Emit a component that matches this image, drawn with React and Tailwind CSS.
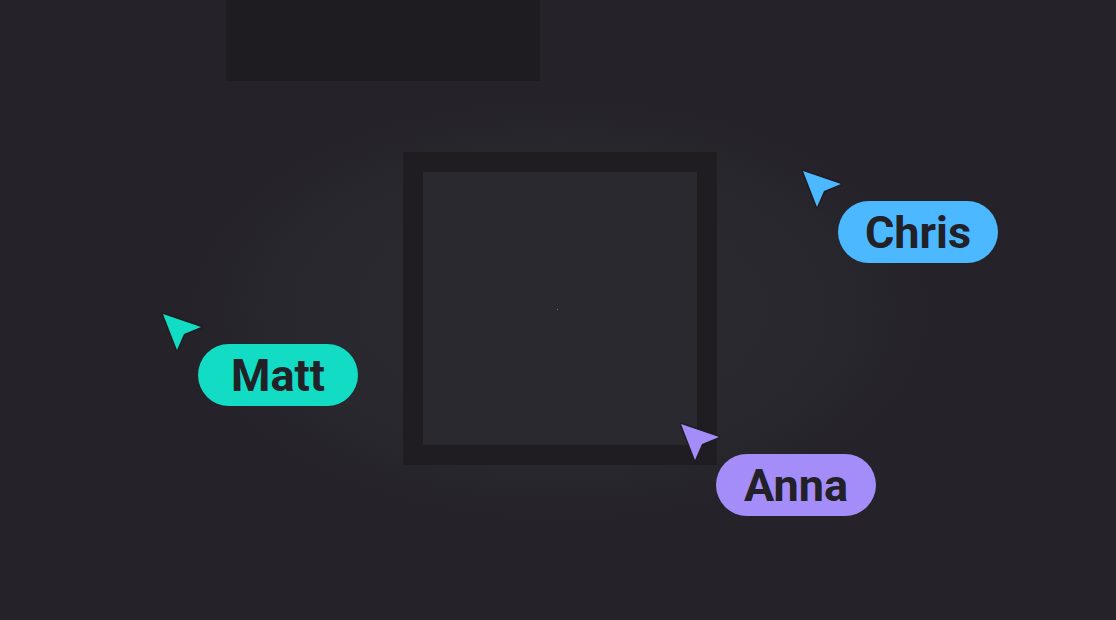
import React from "react";

const users = [
  { name: "Chris", color: "#4cb8ff", x: 803, y: 171, pill: "bg-[#4cb8ff]" },
  { name: "Matt", color: "#12dcc4", x: 163, y: 314, pill: "bg-[#12dcc4]" },
  { name: "Anna", color: "#a48cf9", x: 681, y: 424, pill: "bg-[#a48cf9]" },
];

function Cursor({ user }) {
  return (
    <div className="absolute" style={{ left: user.x - 6, top: user.y - 6 }}>
      <svg width="52" height="52" viewBox="0 0 52 52" className="block">
        <path
          d="M6 6 L44 19 L27 26 L20 42 Z"
          fill={user.color}
          stroke="#1f1d22"
          strokeWidth="3"
          strokeLinejoin="round"
          paintOrder="stroke"
        />
      </svg>
      <div
        className={`absolute left-[41px] top-[36px] flex h-[62px] w-[160px] items-center justify-center rounded-full ${user.pill} text-[45px] font-bold leading-none text-[#222127]`}
        style={{ fontFamily: "Roboto, 'Liberation Sans', sans-serif" }}
      >
        {user.name}
      </div>
    </div>
  );
}

export default function App() {
  return (
    <div className="relative h-[620px] w-[1116px] overflow-hidden bg-[#252329] bg-[radial-gradient(ellipse_370px_210px_at_560px_310px,#2b2a31_0%,#29282f_70%,#252329_100%)]">
      <div className="ml-[226px] h-[81px] w-[314px] bg-[#1e1c21]" />
      <div className="relative ml-[403px] mt-[71px] h-[313px] w-[314px] border-[20px] border-[#1f1d22] bg-[#2a2930]">
        <div className="absolute left-[134px] top-[137px] h-px w-px bg-[#7a66c8]" />
      </div>
      {users.map((u) => (
        <Cursor key={u.name} user={u} />
      ))}
    </div>
  );
}
